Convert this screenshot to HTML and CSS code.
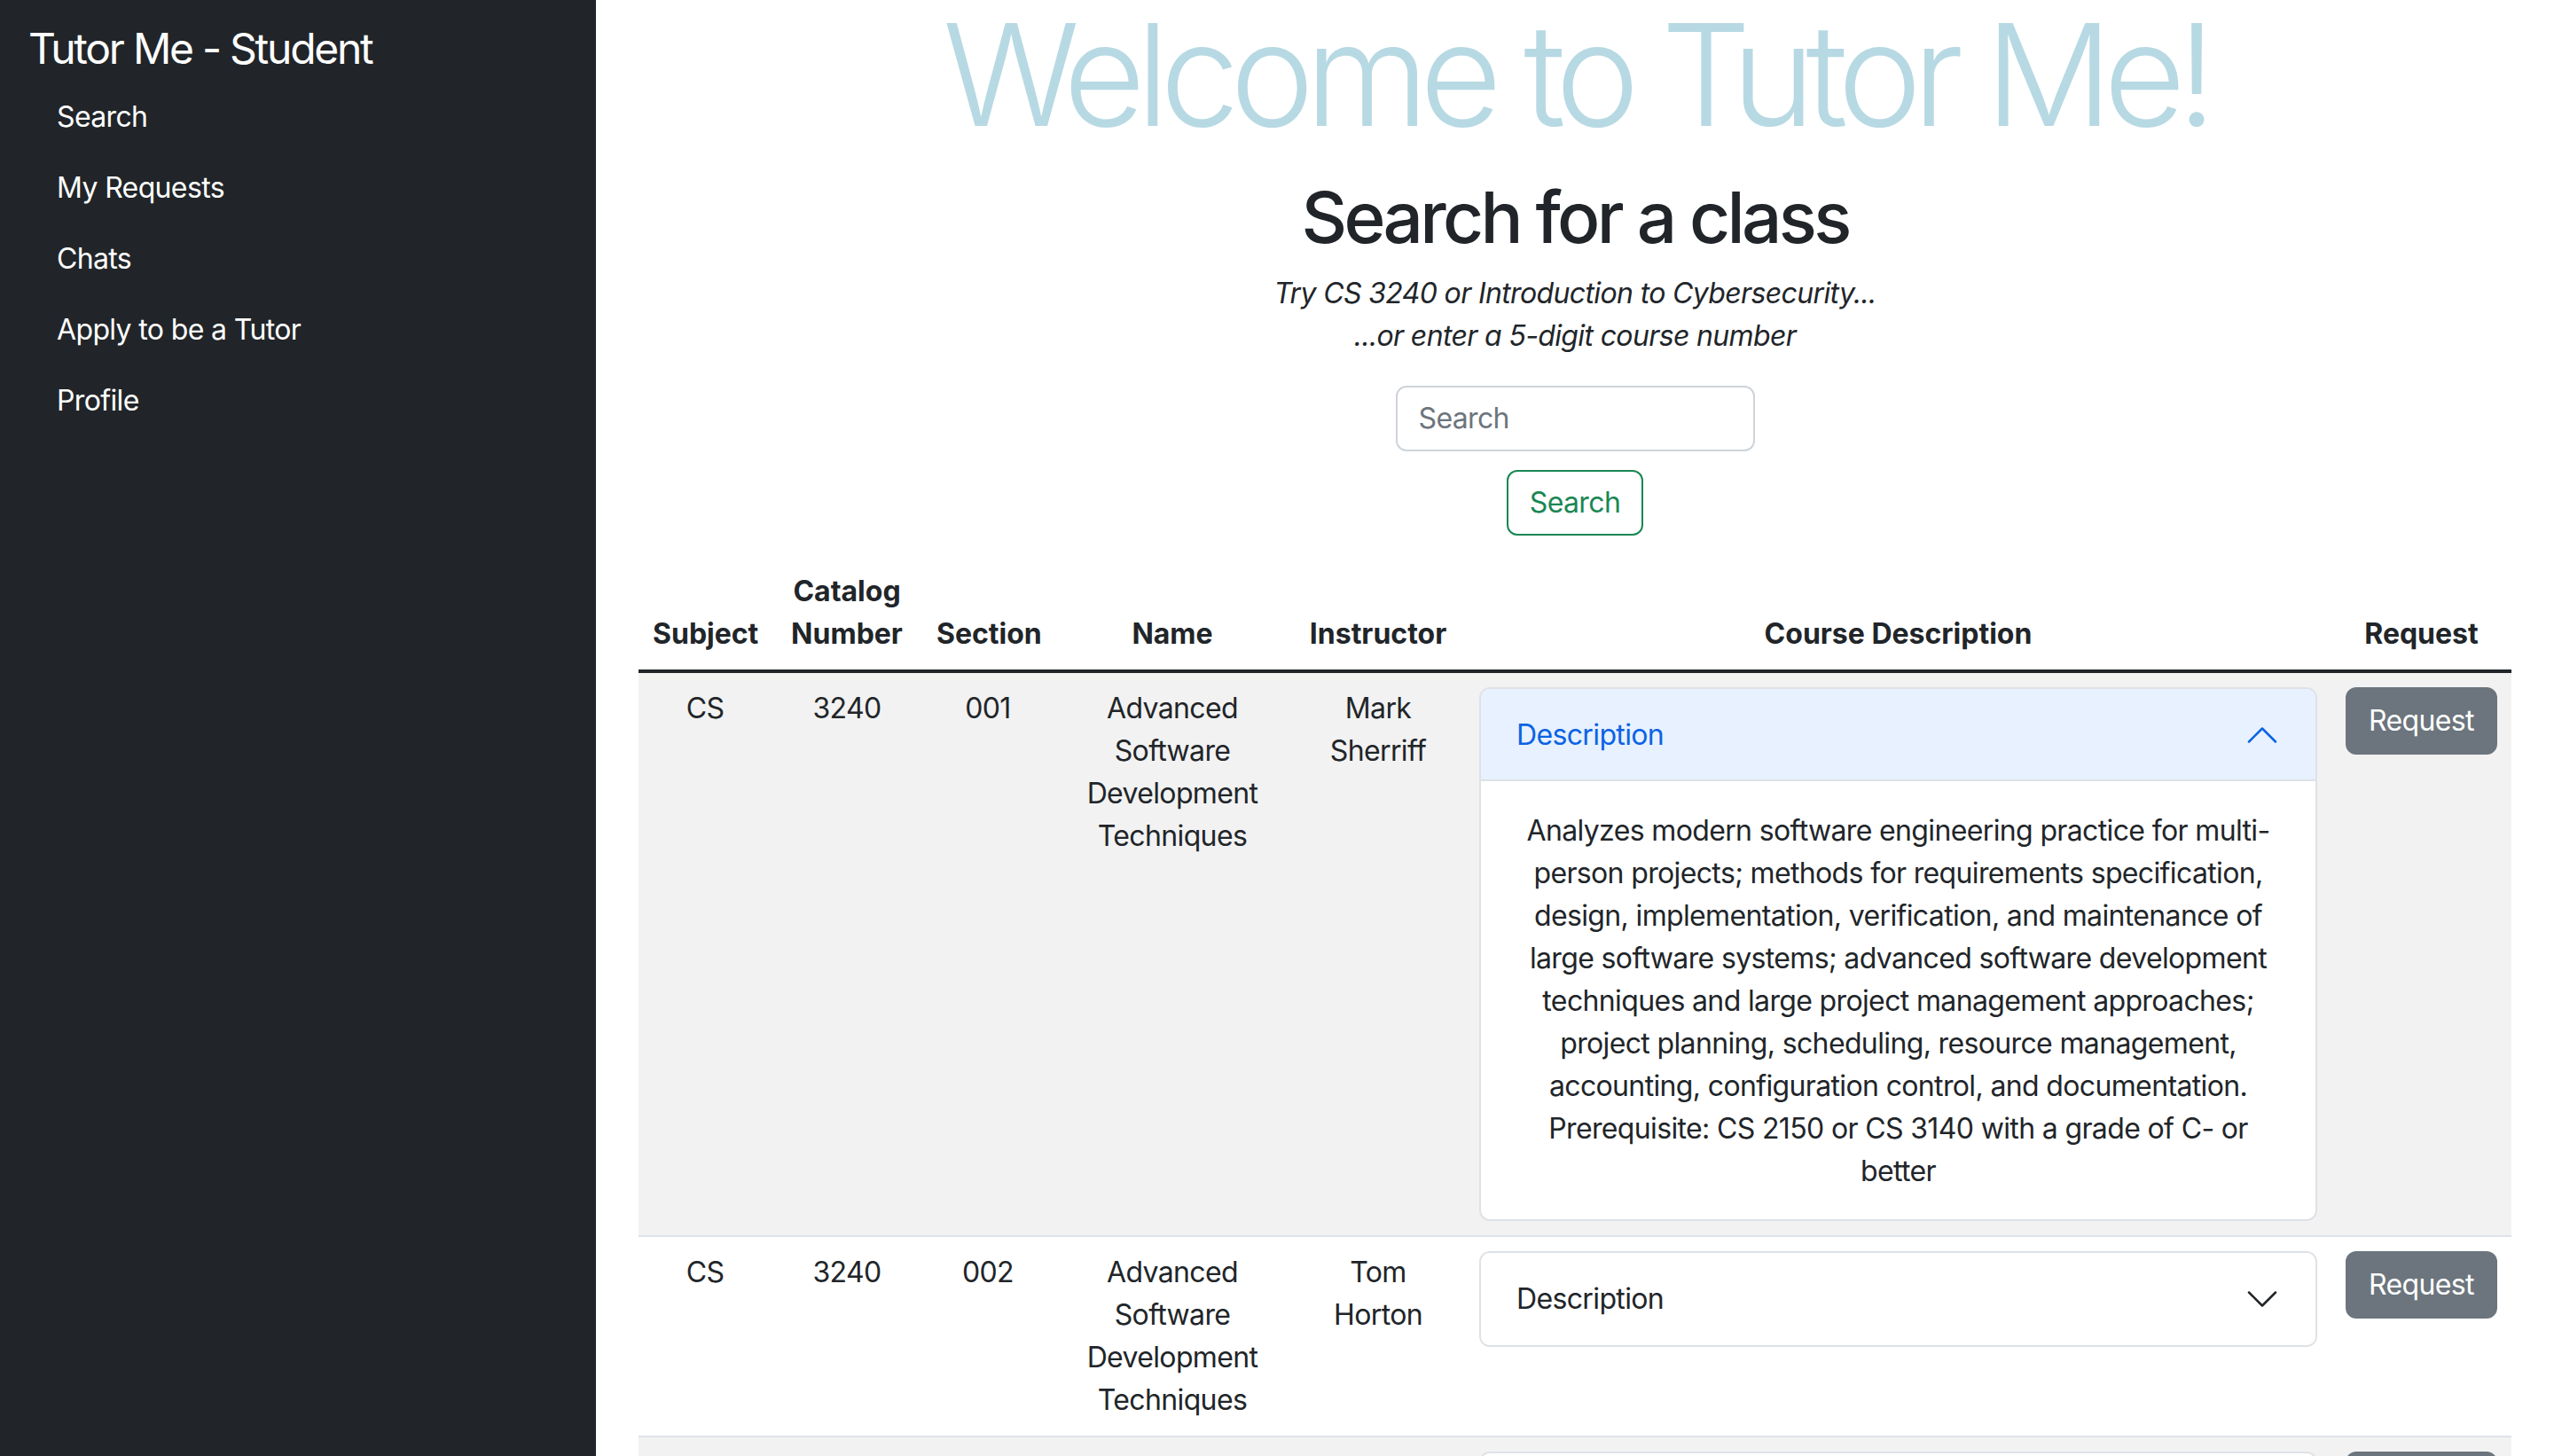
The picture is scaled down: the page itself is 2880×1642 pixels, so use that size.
FILE: index.html
```html
<!DOCTYPE html>
<html lang="en">
<head>
<meta charset="utf-8">
<title>Tutor Me - Student</title>
<link rel="stylesheet" href="styles.css">
</head>
<body>
<div class="layout">
  <aside class="sidebar">
    <div class="brand">Tutor Me - Student</div>
    <ul class="nav">
      <li><a class="nav-link" href="#">Search</a></li>
      <li><a class="nav-link" href="#">My Requests</a></li>
      <li><a class="nav-link" href="#">Chats</a></li>
      <li><a class="nav-link" href="#">Apply to be a Tutor</a></li>
      <li><a class="nav-link" href="#">Profile</a></li>
    </ul>
  </aside>
  <main class="main">
    <h1 class="welcome">Welcome to Tutor Me!</h1>
    <h2 class="search-title">Search for a class</h2>
    <p class="hint"><i>Try CS 3240 or Introduction to Cybersecurity...</i><br><i>...or enter a 5-digit course number</i></p>
    <form class="search-form">
      <input class="search-input" type="text" placeholder="Search">
      <button class="btn btn-outline-success" type="button">Search</button>
    </form>
    <table class="courses">
      <colgroup>
        <col class="c-subject"><col class="c-catalog"><col class="c-section"><col class="c-name"><col class="c-instructor"><col class="c-desc"><col class="c-request">
      </colgroup>
      <thead>
        <tr>
          <th>Subject</th><th>Catalog Number</th><th>Section</th><th>Name</th><th>Instructor</th><th>Course Description</th><th>Request</th>
        </tr>
      </thead>
      <tbody>
        <tr class="odd">
          <td>CS</td><td>3240</td><td>001</td><td>Advanced Software Development Techniques</td><td>Mark Sherriff</td>
          <td>
            <div class="accordion">
              <div class="acc-button open">
                <span>Description</span>
                <svg class="chev" viewBox="0 0 16 16" fill="none" stroke-linecap="round" stroke-linejoin="round"><path d="M2 5L8 11L14 5"/></svg>
              </div>
              <div class="acc-body">Analyzes modern software engineering practice for multi-person projects; methods for requirements specification, design, implementation, verification, and maintenance of large software systems; advanced software development techniques and large project management approaches; project planning, scheduling, resource management, accounting, configuration control, and documentation. Prerequisite: CS 2150 or CS 3140 with a grade of C- or better</div>
            </div>
          </td>
          <td><button class="btn btn-secondary" type="button">Request</button></td>
        </tr>
        <tr>
          <td>CS</td><td>3240</td><td>002</td><td>Advanced Software Development Techniques</td><td>Tom Horton</td>
          <td>
            <div class="accordion">
              <div class="acc-button">
                <span>Description</span>
                <svg class="chev" viewBox="0 0 16 16" fill="none" stroke-linecap="round" stroke-linejoin="round"><path d="M2 5L8 11L14 5"/></svg>
              </div>
            </div>
          </td>
          <td><button class="btn btn-secondary" type="button">Request</button></td>
        </tr>
        <tr class="odd">
          <td>CS</td><td>3240</td><td>003</td><td>Advanced Software Development Techniques</td><td>Mark Sherriff</td>
          <td>
            <div class="accordion">
              <div class="acc-button">
                <span>Description</span>
                <svg class="chev" viewBox="0 0 16 16" fill="none" stroke-linecap="round" stroke-linejoin="round"><path d="M2 5L8 11L14 5"/></svg>
              </div>
            </div>
          </td>
          <td><button class="btn btn-secondary" type="button">Request</button></td>
        </tr>
      </tbody>
    </table>
  </main>
</div>
</body>
</html>
```

FILE: styles.css
```css
* { box-sizing: border-box; }

html, body {
  margin: 0;
  padding: 0;
}

body {
  font-family: "Inter", "Noto Sans", sans-serif;
  font-size: 32px;
  line-height: 1.5;
  letter-spacing: -0.02em;
  color: #212529;
  background: #fff;
}

.layout {
  display: flex;
  min-height: 100vh;
}

/* Sidebar */
.sidebar {
  width: 672px;
  flex-shrink: 0;
  background: #212529;
  color: #fff;
  padding: 26px 32px;
}

.brand {
  font-size: 48px;
  line-height: 1.2;
  letter-spacing: -0.047em;
  margin-bottom: 8px;
}

.nav {
  list-style: none;
  margin: 0;
  padding: 0;
}

.nav-link {
  display: block;
  padding: 16px 32px;
  color: #fff;
  text-decoration: none;
}

/* Main */
.main {
  flex: 1;
  padding: 0 48px;
  text-align: center;
}

.welcome {
  margin: 0;
  font-size: 160px;
  font-weight: 300;
  line-height: 168px;
  letter-spacing: -0.065em;
  color: #b7d9e3;
}

.search-title {
  margin: 29px 0 0;
  font-size: 80px;
  font-weight: 500;
  line-height: 96px;
  letter-spacing: -0.046em;
}

.hint {
  margin: 14px 0 0;
}

.search-form {
  display: flex;
  flex-direction: column;
  align-items: center;
  gap: 21px;
  margin-top: 32px;
}

.search-input {
  width: 405px;
  font: inherit;
  letter-spacing: inherit;
  line-height: 48px;
  padding: 11px 24px;
  border: 2px solid #ced4da;
  border-radius: 12px;
  color: #212529;
  background: #fff;
}

.search-input::placeholder {
  color: #6c757d;
}

.btn {
  font: inherit;
  letter-spacing: inherit;
  line-height: 48px;
  padding: 11px 24px;
  border: 2px solid transparent;
  border-radius: 12px;
  cursor: pointer;
}

.btn-outline-success {
  color: #198754;
  border-color: #198754;
  background: transparent;
}

.btn-secondary {
  color: #fff;
  background: #6c757d;
  border-color: #6c757d;
  padding: 12px 24px;
}

/* Table */
.courses {
  width: 100%;
  margin-top: 23px;
  border-collapse: collapse;
  table-layout: fixed;
}

.c-subject { width: 150px; }
.c-catalog { width: 170px; }
.c-section { width: 148px; }
.c-name { width: 268px; }
.c-instructor { width: 196px; }
.c-desc { width: 977px; }
.c-request { width: 203px; }

.courses th {
  padding: 16px;
  font-weight: 700;
  letter-spacing: 0;
  vertical-align: bottom;
  text-align: center;
  border-bottom: 4px solid #212529;
}

.courses td {
  padding: 16px;
  vertical-align: top;
  text-align: center;
  border-bottom: 2px solid #dee2e6;
}

.courses tr.odd td {
  background: #f2f2f2;
}

/* Accordion */
.accordion {
  border: 2px solid #dee2e6;
  border-radius: 12px;
  overflow: hidden;
  background: #fff;
  text-align: left;
}

.acc-button {
  display: flex;
  align-items: center;
  justify-content: space-between;
  padding: 28px 40px;
  line-height: 48px;
  color: #212529;
  background: #fff;
}

.acc-button.open {
  color: #0c63e4;
  background: #e7f1ff;
  border-bottom: 2px solid #dee2e6;
  padding-bottom: 26px;
}

.chev {
  width: 40px;
  height: 40px;
  stroke: #212529;
  flex-shrink: 0;
}

.acc-button.open .chev {
  stroke: #0c63e4;
  transform: rotate(180deg);
}

.acc-body {
  padding: 32px 40px 30px;
  text-align: center;
}
```
